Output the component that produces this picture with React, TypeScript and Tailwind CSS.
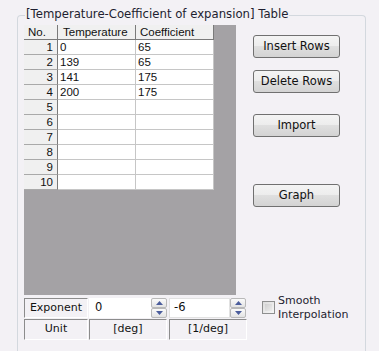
import type { FC } from 'react';

// ─── Data ───────────────────────────────────────────────────────────────────

const ROWS: [string, string][] = [
  ['0', '65'],
  ['139', '65'],
  ['141', '175'],
  ['200', '175'],
  ['', ''],
  ['', ''],
  ['', ''],
  ['', ''],
  ['', ''],
  ['', ''],
];

const UI_FONT = "font-['DejaVu_Sans',sans-serif]";
const GRID_FONT = "font-['Liberation_Sans',Arial,sans-serif]";

// ─── Pieces ─────────────────────────────────────────────────────────────────

const WinButton: FC<{ label: string; className?: string }> = ({ label, className = '' }) => (
  <button
    className={`w-[87px] h-[23px] border border-[#707070] rounded-[3px] bg-[linear-gradient(#f4f4f4_0%,#ececec_50%,#dfdfdf_50%,#d3d3d3_100%)] text-[11.5px] text-[#111] leading-none ${UI_FONT} ${className}`}
  >
    {label}
  </button>
);

const Arrow: FC<{ up?: boolean }> = ({ up }) => (
  <svg width="7" height="4" viewBox="0 0 7 4">
    <path d={up ? 'M3.5 0 L7 4 L0 4 Z' : 'M0 0 L7 0 L3.5 4 Z'} fill="#4b5d9c" />
  </svg>
);

const Spin: FC = () => (
  <div className="flex flex-col w-[16px] h-[20px]">
    <div className="h-[10px] flex items-center justify-center border border-[#b9b9b9] rounded-[2px] bg-linear-to-b from-[#fbfbfb] to-[#e3e3e3]">
      <Arrow up />
    </div>
    <div className="h-[10px] flex items-center justify-center border border-[#b9b9b9] rounded-[2px] bg-linear-to-b from-[#fbfbfb] to-[#e3e3e3]">
      <Arrow />
    </div>
  </div>
);

const LabelCell: FC<{ text: string; width: string }> = ({ text, width }) => (
  <div
    className={`${width} h-full flex items-center justify-center border-t border-l border-[#8c8c8c] border-b border-r border-b-white border-r-white text-[11px] text-[#111] ${UI_FONT}`}
  >
    {text}
  </div>
);

// ─── Component ──────────────────────────────────────────────────────────────

export default function App() {
  return (
    <div className="w-[379px] h-[351px] overflow-hidden bg-[#f3f1f5] pt-[15px] pl-[17px]">
      <div className="relative w-[349px] h-[336px] border border-b-0 border-[#d3d8de] rounded-t-[4px] pt-[9px] pl-[6px]">
        {/* Group title */}
        <div
          className={`absolute left-[7px] top-[-9px] px-[1px] bg-[#f3f1f5] text-[11.7px] leading-[15px] text-[#1e1e30] ${UI_FONT}`}
        >
          [Temperature-Coefficient of expansion] Table
        </div>

        {/* Grid + buttons */}
        <div className="flex">
          <div className="w-[212px] h-[270px] bg-[#a4a2a5]">
            <div className={`w-[190px] text-[11.5px] text-[#111] ${GRID_FONT}`}>
              <div className="flex h-[15px]">
                <div className="w-[34px] border-r border-b border-[#7a7a7a] bg-[#f0f0f0] pl-[4px] leading-[14px]">
                  No.
                </div>
                <div className="w-[78px] border-r border-b border-[#7a7a7a] bg-[#f0f0f0] pl-[5px] leading-[14px]">
                  Temperature
                </div>
                <div className="w-[78px] border-r border-b border-[#7a7a7a] bg-[#f0f0f0] pl-[4px] leading-[14px]">
                  Coefficient
                </div>
              </div>
              {ROWS.map(([t, c], i) => (
                <div key={i} className="flex h-[15px]">
                  <div className="w-[34px] border-r border-b border-r-[#7a7a7a] border-b-[#a9a9a9] bg-[#f0f0f0] pr-[4px] text-right leading-[14px]">
                    {i + 1}
                  </div>
                  <div className="w-[78px] border-r border-b border-[#c6c6c6] bg-white pl-[2px] leading-[14px]">
                    {t}
                  </div>
                  <div className="w-[78px] border-r border-b border-[#c6c6c6] bg-white pl-[2px] leading-[14px]">
                    {c}
                  </div>
                </div>
              ))}
            </div>
          </div>

          <div className="ml-[17px] pt-[10px] flex flex-col">
            <WinButton label="Insert Rows" />
            <WinButton label="Delete Rows" className="mt-[12px]" />
            <WinButton label="Import" className="mt-[21px]" />
            <WinButton label="Graph" className="mt-[47px]" />
          </div>
        </div>

        {/* Exponent / unit + checkbox */}
        <div className="flex mt-[3px]">
          <div className="flex flex-col gap-[1px]">
            <div className="flex h-[20px]">
              <LabelCell text="Exponent" width="w-[64px]" />
              <div className={`ml-[1px] w-[62px] h-full bg-white pl-[6px] flex items-center text-[11.5px] text-[#111] ${UI_FONT}`}>
                0
              </div>
              <Spin />
              <div className={`ml-[2px] w-[61px] h-full bg-white border border-[#e2e2e2] pl-[4px] flex items-center text-[11.5px] text-[#111] ${UI_FONT}`}>
                -6
              </div>
              <Spin />
            </div>
            <div className="flex h-[21px]">
              <LabelCell text="Unit" width="w-[64px]" />
              <div className="ml-[1px] h-full">
                <LabelCell text="[deg]" width="w-[78px]" />
              </div>
              <div className="ml-[2px] h-full">
                <LabelCell text="[1/deg]" width="w-[78px]" />
              </div>
            </div>
          </div>

          <div className="ml-[15px] flex items-start">
            <div className="mt-[3px] w-[13px] h-[13px] border border-[#8e8f8f] bg-linear-to-br from-[#dcdcdc] to-[#f6f6f6] p-[2px]">
              <div className="w-full h-full bg-linear-to-br from-[#d0d0d0] to-[#ececec]" />
            </div>
            <div className={`ml-[3px] -mt-[4px] text-[11px] leading-[14px] text-[#1e1e30] ${UI_FONT}`}>
              Smooth
              <br />
              Interpolation
            </div>
          </div>
        </div>
      </div>
    </div>
  );
}
